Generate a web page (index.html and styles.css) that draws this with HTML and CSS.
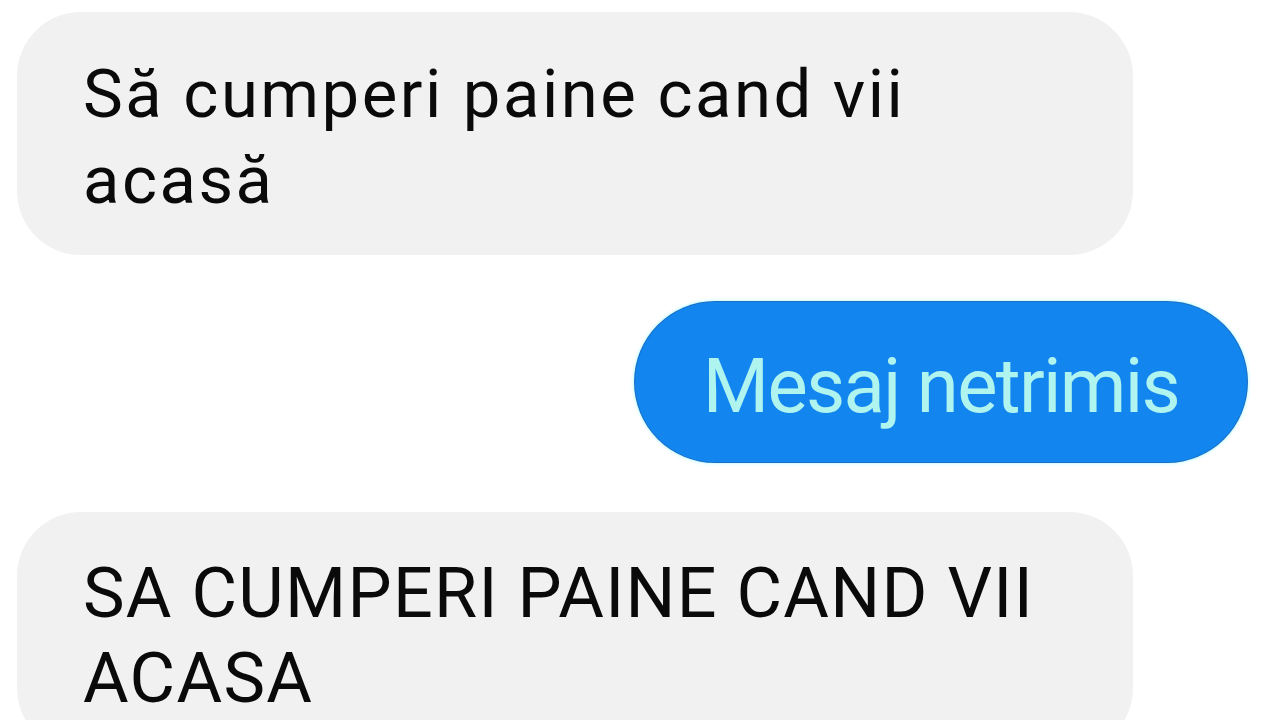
FILE: index.html
```html
<!DOCTYPE html>
<html lang="ro">
<head>
<meta charset="utf-8">
<title>Mesaj netrimis</title>
<link rel="stylesheet" href="styles.css">
</head>
<body>
<main class="chat">
  <div class="bubble bubble-in first">Să cumperi paine cand vii<br>acasă</div>
  <div class="bubble bubble-out">Mesaj netrimis</div>
  <div class="bubble bubble-in caps">SA CUMPERI PAINE CAND VII<br>ACASA</div>
</main>
</body>
</html>
```
FILE: styles.css
```css
html, body {
  margin: 0;
  padding: 0;
  background: #ffffff;
  width: 1280px;
  height: 720px;
  overflow: hidden;
}
.chat {
  display: flex;
  flex-direction: column;
  padding: 12px 33px 0 17px;
  font-family: Roboto, "Noto Sans", sans-serif;
}
.bubble {
  box-sizing: border-box;
}
.bubble-in {
  width: 1116px;
  background: #f1f1f1;
  color: #0a0a0a;
  border-radius: 64px;
  padding-left: 66px;
}
.first {
  font-size: 67px;
  line-height: 86px;
  letter-spacing: 2.5px;
  padding-top: 39px;
  padding-bottom: 32px;
}
.bubble-out {
  align-self: flex-end;
  margin-top: 47px;
  background: #1286ee;
  color: #b0f4ef;
  border-radius: 80px;
  font-size: 76px;
  line-height: 100px;
  letter-spacing: -1.7px;
  padding: 34px 68px 26px 68px;
  box-shadow: 0 0 0 1px #1a6fc4, 0 0 3px 2px #c8fbff;
}
.caps {
  margin-top: 50px;
  font-size: 70px;
  line-height: 85px;
  letter-spacing: 1.3px;
  padding-top: 39px;
  padding-bottom: 31px;
}
```
